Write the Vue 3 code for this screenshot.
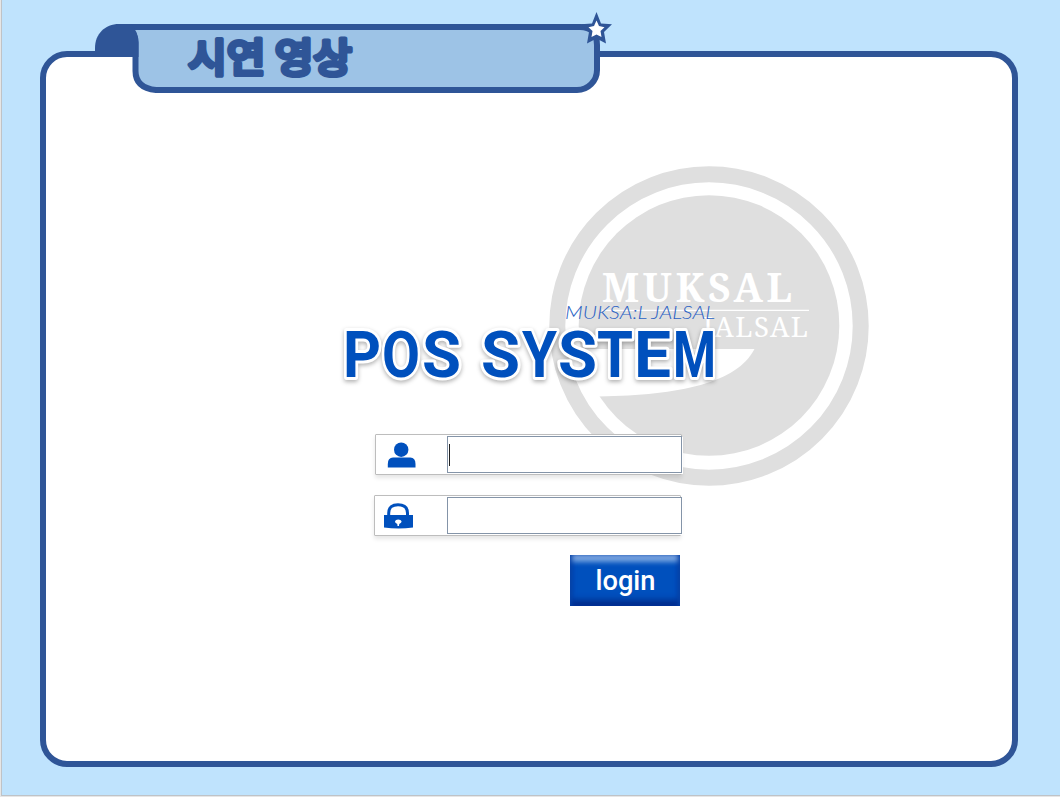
<script setup>
import { ref } from 'vue'

const user = ref('')
const password = ref('')

const letters = [
  { c: 'P', x: 3, w: 38 },
  { c: 'O', x: 42, w: 38 },
  { c: 'S', x: 82, w: 39 },
  { c: 'S', x: 141, w: 39 },
  { c: 'Y', x: 182, w: 35 },
  { c: 'S', x: 218, w: 39 },
  { c: 'T', x: 257, w: 36 },
  { c: 'E', x: 294, w: 37 },
  { c: 'M', x: 333, w: 43 },
]
</script>

<template>
  <main class="slide">
    <section class="panel">
      <svg class="watermark" width="320" height="320" viewBox="549 166 320 320">
        <circle cx="709" cy="326" r="151.7" fill="none" stroke="#dfdfdf" stroke-width="16" />
        <circle cx="709" cy="325.5" r="130.3" fill="#dfdfdf" />
        <path d="M575 349H754.500C737 383 680 395 599 396.500L580 385Z" fill="#fff" />
        <path d="M602 310.300H809" stroke="#fff" stroke-width="1.200" />
        <text class="mark-bold" x="602" y="301.500" textLength="190">MUKSAL</text>
        <text class="mark-thin" x="703" y="337" textLength="105">JALSAL</text>
      </svg>

      <div class="content">
        <svg class="logo" width="380" height="90" viewBox="0 0 380 90">
          <text class="script" x="225" y="19" textLength="150" lengthAdjust="spacingAndGlyphs">MUKSA:L JALSAL</text>
          <g class="pos">
            <text
              v-for="(l, i) in letters"
              :key="i"
              :x="l.x"
              y="77"
              :textLength="l.w"
              lengthAdjust="spacingAndGlyphs"
            >{{ l.c }}</text>
          </g>
        </svg>

        <form class="form" @submit.prevent>
          <label class="field first">
            <svg class="icon" width="30" height="28" viewBox="0 0 30 28">
              <circle cx="14.200" cy="7.700" r="7.200" />
              <path d="M.8 25.500V22Q.8 15.500 6 15.500H23.300Q28.500 15.500 28.500 22V25.500Z" />
            </svg>
            <span class="entry"><i class="caret"></i><input v-model="user" type="text" aria-label="ID" /></span>
          </label>
          <label class="field second">
            <svg class="icon lock" width="30" height="28" viewBox="0 0 30 28">
              <path d="M5.700 14V11C5.700 5 9.500 2.800 15 2.800S24.500 5 24.500 11V14" fill="none" stroke="#0050bd" stroke-width="3" />
              <path d="M1 13H30V25.500Q15.500 27.500 1 25.500Z" />
              <path d="M14.500 24L14.300 22Q11.700 21 12 19.200Q12.500 17.600 15.200 17.600T18.600 19.200Q18.700 21 16.200 22L16 24Z" fill="#fff" />
            </svg>
            <span class="entry"><input v-model="password" type="password" aria-label="Password" /></span>
          </label>
          <button class="login" type="submit">
            <svg width="110" height="51" viewBox="0 0 110 51">
              <text x="25.500" y="35" textLength="60" lengthAdjust="spacingAndGlyphs">login</text>
            </svg>
          </button>
        </form>
      </div>
    </section>

    <svg class="tab" width="520" height="85" viewBox="94 11 520 85">
      <path d="M127 27H580Q597 27 597 45V70A20 20 0 0 1 577 90H156Q135.500 88 135.500 71V42Q135.500 33 127 27Z" fill="#9dc3e6" stroke="#2f5597" stroke-width="6" />
      <path d="M95 57V48C95 34 105 24 119 24H131Q138.500 32 138.500 43V57Z" fill="#2f5597" />
      <text class="heading" x="188" y="72" textLength="164" lengthAdjust="spacingAndGlyphs">시연 영상</text>
      <path d="M596.500 12L601 23.500L612 24.300L604 32L606 43.500L596.500 38.500L587 43.500L589 32L581 24.300L592 23.500Z" fill="#2f5597" />
      <path d="M596.500 20.500L599 26L604.500 27.300L600.500 31L601.500 37L596.500 34.500L591.500 37L592.500 31L588.500 27.300L594 26Z" fill="#fff" />
    </svg>
  </main>
</template>

<style>
body {
  margin: 0;
}
</style>

<style scoped>
.slide {
  position: relative;
  box-sizing: border-box;
  width: 1060px;
  height: 797px;
  padding: 51px 42px 29px 39px;
  background: #bfe3fd;
  border-left: 1px solid #e6e6e6;
  border-bottom: 1px solid #e6e6e6;
  box-shadow: inset 1px 0 #bfc3c7, inset 0 -1px #bfc3c7;
  overflow: hidden;
}

.panel {
  position: relative;
  box-sizing: border-box;
  width: 978px;
  height: 716px;
  border: 6px solid #2f5597;
  border-radius: 27px;
  background: #fff;
}

.tab {
  position: absolute;
  left: 93px;
  top: 11px;
}

.heading {
  font: 500 40px "Noto Sans CJK KR", sans-serif;
  fill: #2f5597;
  stroke: #2f5597;
  stroke-width: 4.2px;
  stroke-linejoin: round;
}

.watermark {
  position: absolute;
  left: 503px;
  top: 109px;
}

.mark-bold {
  font: bold 39px "Noto Serif", "Liberation Serif", serif;
  fill: #fff;
}

.mark-thin {
  font: 27.5px "Noto Serif", "Liberation Serif", serif;
  fill: #fff;
}

.content {
  position: relative;
  padding: 243px 0 0 294px;
}

.logo {
  display: block;
  overflow: visible;
}

.script {
  font: italic 300 18.5px Lato, sans-serif;
  fill: #2b62c4;
}

.pos {
  filter: drop-shadow(0 2px 2px rgba(0, 0, 0, 0.3));
}

.pos text {
  font: bold 65px Roboto, sans-serif;
  fill: #0050bd;
  stroke: #fff;
  stroke-width: 6px;
  stroke-linejoin: round;
  paint-order: stroke;
}

.form {
  display: flex;
  flex-direction: column;
  width: 343px;
  padding-top: 44px;
}

.field {
  box-sizing: border-box;
  display: flex;
  align-items: flex-start;
  width: 307px;
  height: 41px;
  border: 1px solid #bdbdbd;
  border-radius: 1px;
  background: #fff;
  box-shadow: 0 3px 4px rgba(0, 0, 0, 0.1);
}

.first {
  margin: 0 0 20px 35px;
}

.second {
  margin: 0 0 19px 34px;
}

.icon {
  flex: none;
  margin: 7px 30px 0 11px;
  fill: #0050bd;
}

.lock {
  margin: 6px 34px 0 8px;
}

.entry {
  box-sizing: border-box;
  display: flex;
  flex: none;
  align-items: flex-start;
  width: 235px;
  height: 37px;
  margin-top: 1px;
  border: 1px solid #8494a8;
  background: #fff;
  box-shadow: 1px 1px #fff;
}

.caret {
  width: 1px;
  height: 22px;
  margin: 7px 0 0 1px;
  background: #222;
}

.entry input {
  flex: 1;
  min-width: 0;
  height: 34px;
  padding: 0 6px;
  border: 0;
  outline: 0;
  background: transparent;
  font: 18px "Liberation Sans", sans-serif;
}

.login {
  align-self: flex-end;
  width: 110px;
  height: 51px;
  margin-right: 3px;
  padding: 0;
  border: 0;
  background: #0050bd;
  box-shadow: inset 4px 0 5px -2px #003ca2, inset -4px 0 5px -2px #003ca2, inset 0 9px 5px -2px #78a5e0, inset 0 -8px 6px -2px #002c8c;
}

.login svg {
  display: block;
}

.login text {
  font: 500 27px Roboto, sans-serif;
  fill: #fff;
}
</style>
